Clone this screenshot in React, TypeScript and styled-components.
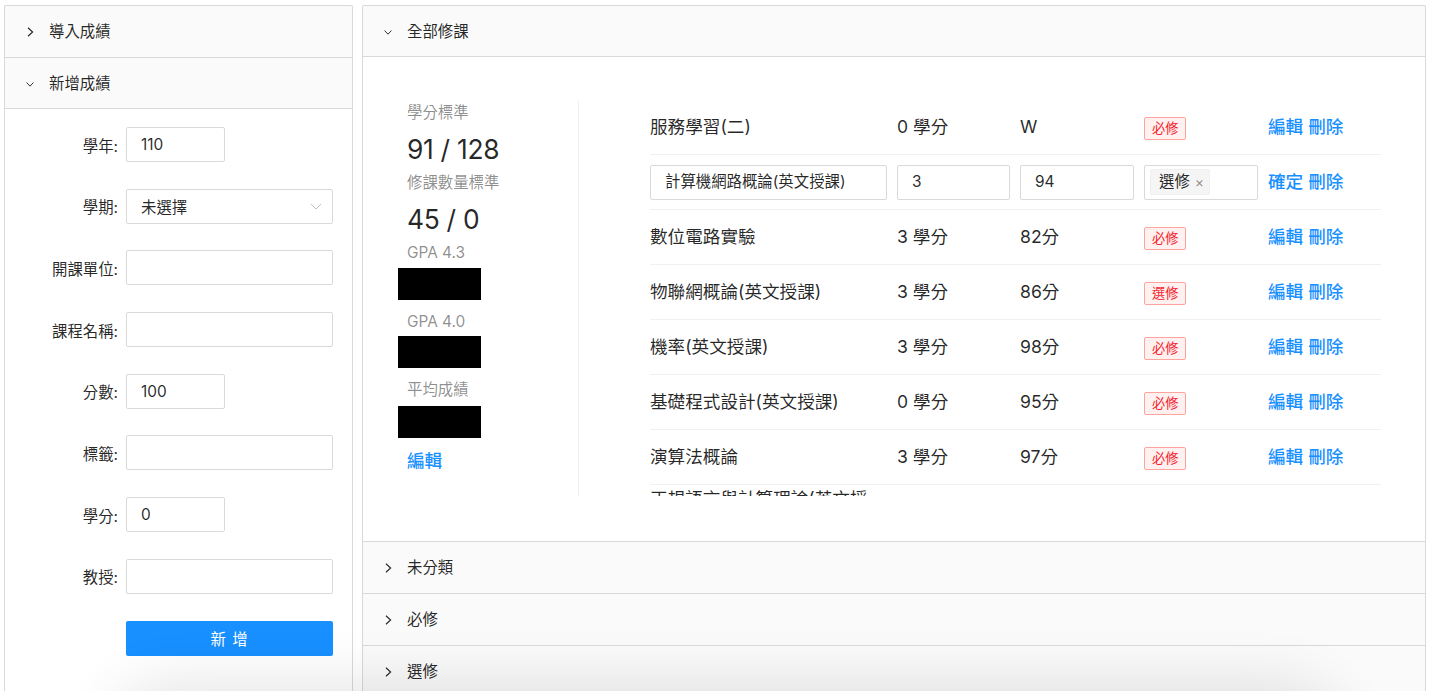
import React from "react";
import styled, { createGlobalStyle } from "styled-components";

const GlobalStyle = createGlobalStyle`
  html, body { margin: 0; padding: 0; background: #fff; }
  body {
    font-family: Inter, "Noto Sans CJK TC", sans-serif;
    color: rgba(0,0,0,0.85);
    font-size: 15.4px;
  }
  * { box-sizing: border-box; }
`;

const Page = styled.div`
  display: flex;
  align-items: flex-start;
  gap: 9px;
  padding: 5px 5px 0 4px;
`;

const Collapse = styled.div<{ $width?: number }>`
  border: 1px solid #d9d9d9;
  border-bottom: 0;
  border-radius: 2px;
  background: #fafafa;
  ${(p) => (p.$width ? `width: ${p.$width}px; flex: none;` : "flex: 1; min-width: 0;")}
`;

const Item = styled.div`
  border-bottom: 1px solid #d9d9d9;
`;

const Header = styled.div`
  display: flex;
  align-items: center;
  height: 51px;
  padding-left: 21px;
  padding-top: 1px;
  gap: 15px;
  font-size: 15.4px;
  color: rgba(0,0,0,0.85);
  line-height: 24px;
`;

const ArrowBox = styled.span`
  display: inline-flex;
  width: 8px;
  justify-content: center;
  align-items: center;
`;

const Content = styled.div`
  background: #fff;
  border-top: 1px solid #d9d9d9;
  margin-top: -1px;
`;

const Arrow = ({ open }: { open?: boolean }) => (
  <ArrowBox>
    {open ? (
      <svg width="10" height="7" viewBox="0 0 10 7">
        <path d="M0.7 1 L5 5.6 L9.3 1" fill="none" stroke="#2b2b2b" strokeWidth="1.2" />
      </svg>
    ) : (
      <svg width="7" height="10" viewBox="0 0 7 10">
        <path d="M1 0.7 L5.6 5 L1 9.3" fill="none" stroke="#2b2b2b" strokeWidth="1.2" />
      </svg>
    )}
  </ArrowBox>
);

const Panel = ({ title, open, children }: { title: string; open?: boolean; children?: React.ReactNode }) => (
  <Item>
    <Header>
      <Arrow open={open} />
      <span>{title}</span>
    </Header>
    {open && <Content>{children}</Content>}
  </Item>
);

/* ---------- Left form ---------- */

const FormBody = styled.div`
  padding: 18px 19px 40px 0;
`;

const FormGrid = styled.div`
  display: grid;
  grid-template-columns: 113px 207px;
  column-gap: 8px;
  row-gap: 26.7px;
  align-items: center;
`;

const Label = styled.label`
  text-align: right;
  font-size: 15.4px;
  color: rgba(0,0,0,0.85);
  white-space: nowrap;
`;

const Input = styled.div<{ $w?: number }>`
  display: flex;
  align-items: center;
  height: 35px;
  width: ${(p) => (p.$w ? `${p.$w}px` : "100%")};
  border: 1px solid #d9d9d9;
  border-radius: 2px;
  padding: 0 12px 0 14px;
  font-size: 15.4px;
  color: rgba(0,0,0,0.85);
  background: #fff;
  white-space: nowrap;
  overflow: hidden;
`;

const SelectBox = styled(Input)`
  justify-content: space-between;
  padding-right: 10px;
`;

const Button = styled.button`
  grid-column: 2;
  height: 35px;
  border: 0;
  border-radius: 2px;
  background: #1890ff;
  color: #fff;
  font-family: inherit;
  font-size: 15.4px;
  letter-spacing: 1px;
`;

const SmallChevron = () => (
  <svg width="12" height="7" viewBox="0 0 12 7">
    <path d="M0.8 0.8 L6 6 L11.2 0.8" fill="none" stroke="#bfbfbf" strokeWidth="1" />
  </svg>
);

const fields: { label: string; value?: string; short?: boolean; select?: boolean }[] = [
  { label: "學年", value: "110", short: true },
  { label: "學期", value: "未選擇", select: true },
  { label: "開課單位" },
  { label: "課程名稱" },
  { label: "分數", value: "100", short: true },
  { label: "標籤" },
  { label: "學分", value: "0", short: true },
  { label: "教授" },
];

/* ---------- Right content ---------- */

const Body = styled.div`
  display: flex;
  padding: 43px 44px 45px 44px;
`;

const StatsCol = styled.div`
  width: 172px;
  flex: none;
  border-right: 1px solid #f0f0f0;
  padding-top: 1px;
`;

const StatTitle = styled.div`
  font-size: 15.4px;
  line-height: 24px;
  color: rgba(0,0,0,0.45);
  margin-bottom: 4.4px;
`;

const StatValue = styled.div`
  font-size: 26.4px;
  line-height: 41.5px;
  height: 41.5px;
  color: rgba(0,0,0,0.85);
  letter-spacing: -0.3px;
`;

const Redacted = styled.div<{ $top: number }>`
  width: 83px;
  height: 32px;
  background: #000;
  margin-left: -9px;
  margin-top: ${(p) => p.$top}px;
`;

const EditLink = styled.a`
  display: block;
  font-size: 17.6px;
  line-height: 24px;
  color: #1890ff;
  text-decoration: none;
  font-weight: 500;
  margin-top: 2px;
`;

const ListCol = styled.div`
  flex: 1;
  margin-left: 71px;
  height: 396px;
  overflow: hidden;
`;

const Row = styled.div`
  display: grid;
  grid-template-columns: 237px 113px 114px 114px 1fr;
  column-gap: 10px;
  align-items: center;
  min-height: 55px;
  border-bottom: 1px solid #f0f0f0;
  font-size: 17.6px;
  line-height: 26px;
  color: rgba(0,0,0,0.85);
`;

const Cell = styled.div`
  min-width: 0;
`;

const Tag = styled.span`
  display: inline-flex;
  align-items: center;
  height: 23px;
  padding: 0 7px;
  font-size: 13.2px;
  line-height: 21px;
  border: 1px solid #ffa39e;
  background: #fff1f0;
  color: #f5222d;
  border-radius: 2px;
`;

const MultiSelect = styled.div`
  display: flex;
  align-items: center;
  height: 35px;
  border: 1px solid #d9d9d9;
  border-radius: 2px;
  padding: 0 5px;
  background: #fff;
`;

const Chip = styled.span`
  display: inline-flex;
  align-items: center;
  gap: 5px;
  height: 26px;
  padding: 0 5px 0 8px;
  background: #f5f5f5;
  border: 1px solid #f0f0f0;
  border-radius: 2px;
  font-size: 15.4px;
  color: rgba(0,0,0,0.85);
`;

const ChipClose = styled.span`
  color: rgba(0,0,0,0.45);
  font-size: 14px;
  line-height: 1;
`;

const Actions = styled.div`
  display: flex;
  gap: 5px;
  font-size: 17.6px;
  color: #1890ff;
  font-weight: 500;
  white-space: nowrap;
`;

const BottomShadow = styled.div`
  position: fixed;
  left: 130px;
  right: 110px;
  top: 712px;
  height: 80px;
  border-radius: 60px;
  box-shadow: 0 -6px 60px 22px rgba(0,0,0,0.11);
  pointer-events: none;
`;

type Course = { name: string; credit: string; score: string; tag: string };

const courses: Course[] = [
  { name: "數位電路實驗", credit: "3 學分", score: "82分", tag: "必修" },
  { name: "物聯網概論(英文授課)", credit: "3 學分", score: "86分", tag: "選修" },
  { name: "機率(英文授課)", credit: "3 學分", score: "98分", tag: "必修" },
  { name: "基礎程式設計(英文授課)", credit: "0 學分", score: "95分", tag: "必修" },
  { name: "演算法概論", credit: "3 學分", score: "97分", tag: "必修" },
  { name: "正規語言與計算理論(英文授課)", credit: "3 學分", score: "90分", tag: "必修" },
];

const CourseRow = ({ c }: { c: Course }) => (
  <Row>
    <Cell>{c.name}</Cell>
    <Cell>{c.credit}</Cell>
    <Cell>{c.score}</Cell>
    <Cell>
      <Tag>{c.tag}</Tag>
    </Cell>
    <Actions>
      <span>編輯</span>
      <span>刪除</span>
    </Actions>
  </Row>
);

export default function App() {
  return (
    <>
      <GlobalStyle />
      <Page>
        <Collapse $width={349}>
          <Panel title="導入成績" />
          <Panel title="新增成績" open>
            <FormBody>
              <FormGrid>
                {fields.map((f) => (
                  <React.Fragment key={f.label}>
                    <Label>{f.label}:</Label>
                    {f.select ? (
                      <SelectBox>
                        <span>{f.value}</span>
                        <SmallChevron />
                      </SelectBox>
                    ) : (
                      <Input $w={f.short ? 99 : undefined}>{f.value}</Input>
                    )}
                  </React.Fragment>
                ))}
                <Button>新 增</Button>
              </FormGrid>
            </FormBody>
          </Panel>
        </Collapse>

        <Collapse>
          <Panel title="全部修課" open>
            <Body>
              <StatsCol>
                <StatTitle>學分標準</StatTitle>
                <StatValue>91 / 128</StatValue>
                <StatTitle>修課數量標準</StatTitle>
                <StatValue>45 / 0</StatValue>
                <StatTitle>GPA 4.3</StatTitle>
                <StatValue>
                  <Redacted $top={-1} />
                </StatValue>
                <StatTitle>GPA 4.0</StatTitle>
                <StatValue>
                  <Redacted $top={-2} />
                </StatValue>
                <StatTitle>平均成績</StatTitle>
                <StatValue>
                  <Redacted $top={0} />
                </StatValue>
                <EditLink>編輯</EditLink>
              </StatsCol>
              <ListCol>
                <Row>
                  <Cell>服務學習(二)</Cell>
                  <Cell>0 學分</Cell>
                  <Cell>W</Cell>
                  <Cell>
                    <Tag>必修</Tag>
                  </Cell>
                  <Actions>
                    <span>編輯</span>
                    <span>刪除</span>
                  </Actions>
                </Row>
                <Row>
                  <Input>計算機網路概論(英文授課)</Input>
                  <Input>3</Input>
                  <Input>94</Input>
                  <MultiSelect>
                    <Chip>
                      選修<ChipClose>×</ChipClose>
                    </Chip>
                  </MultiSelect>
                  <Actions>
                    <span>確定</span>
                    <span>刪除</span>
                  </Actions>
                </Row>
                {courses.map((c) => (
                  <CourseRow key={c.name} c={c} />
                ))}
              </ListCol>
            </Body>
          </Panel>
          <Panel title="未分類" />
          <Panel title="必修" />
          <Panel title="選修" />
        </Collapse>
      </Page>
      <BottomShadow />
    </>
  );
}
